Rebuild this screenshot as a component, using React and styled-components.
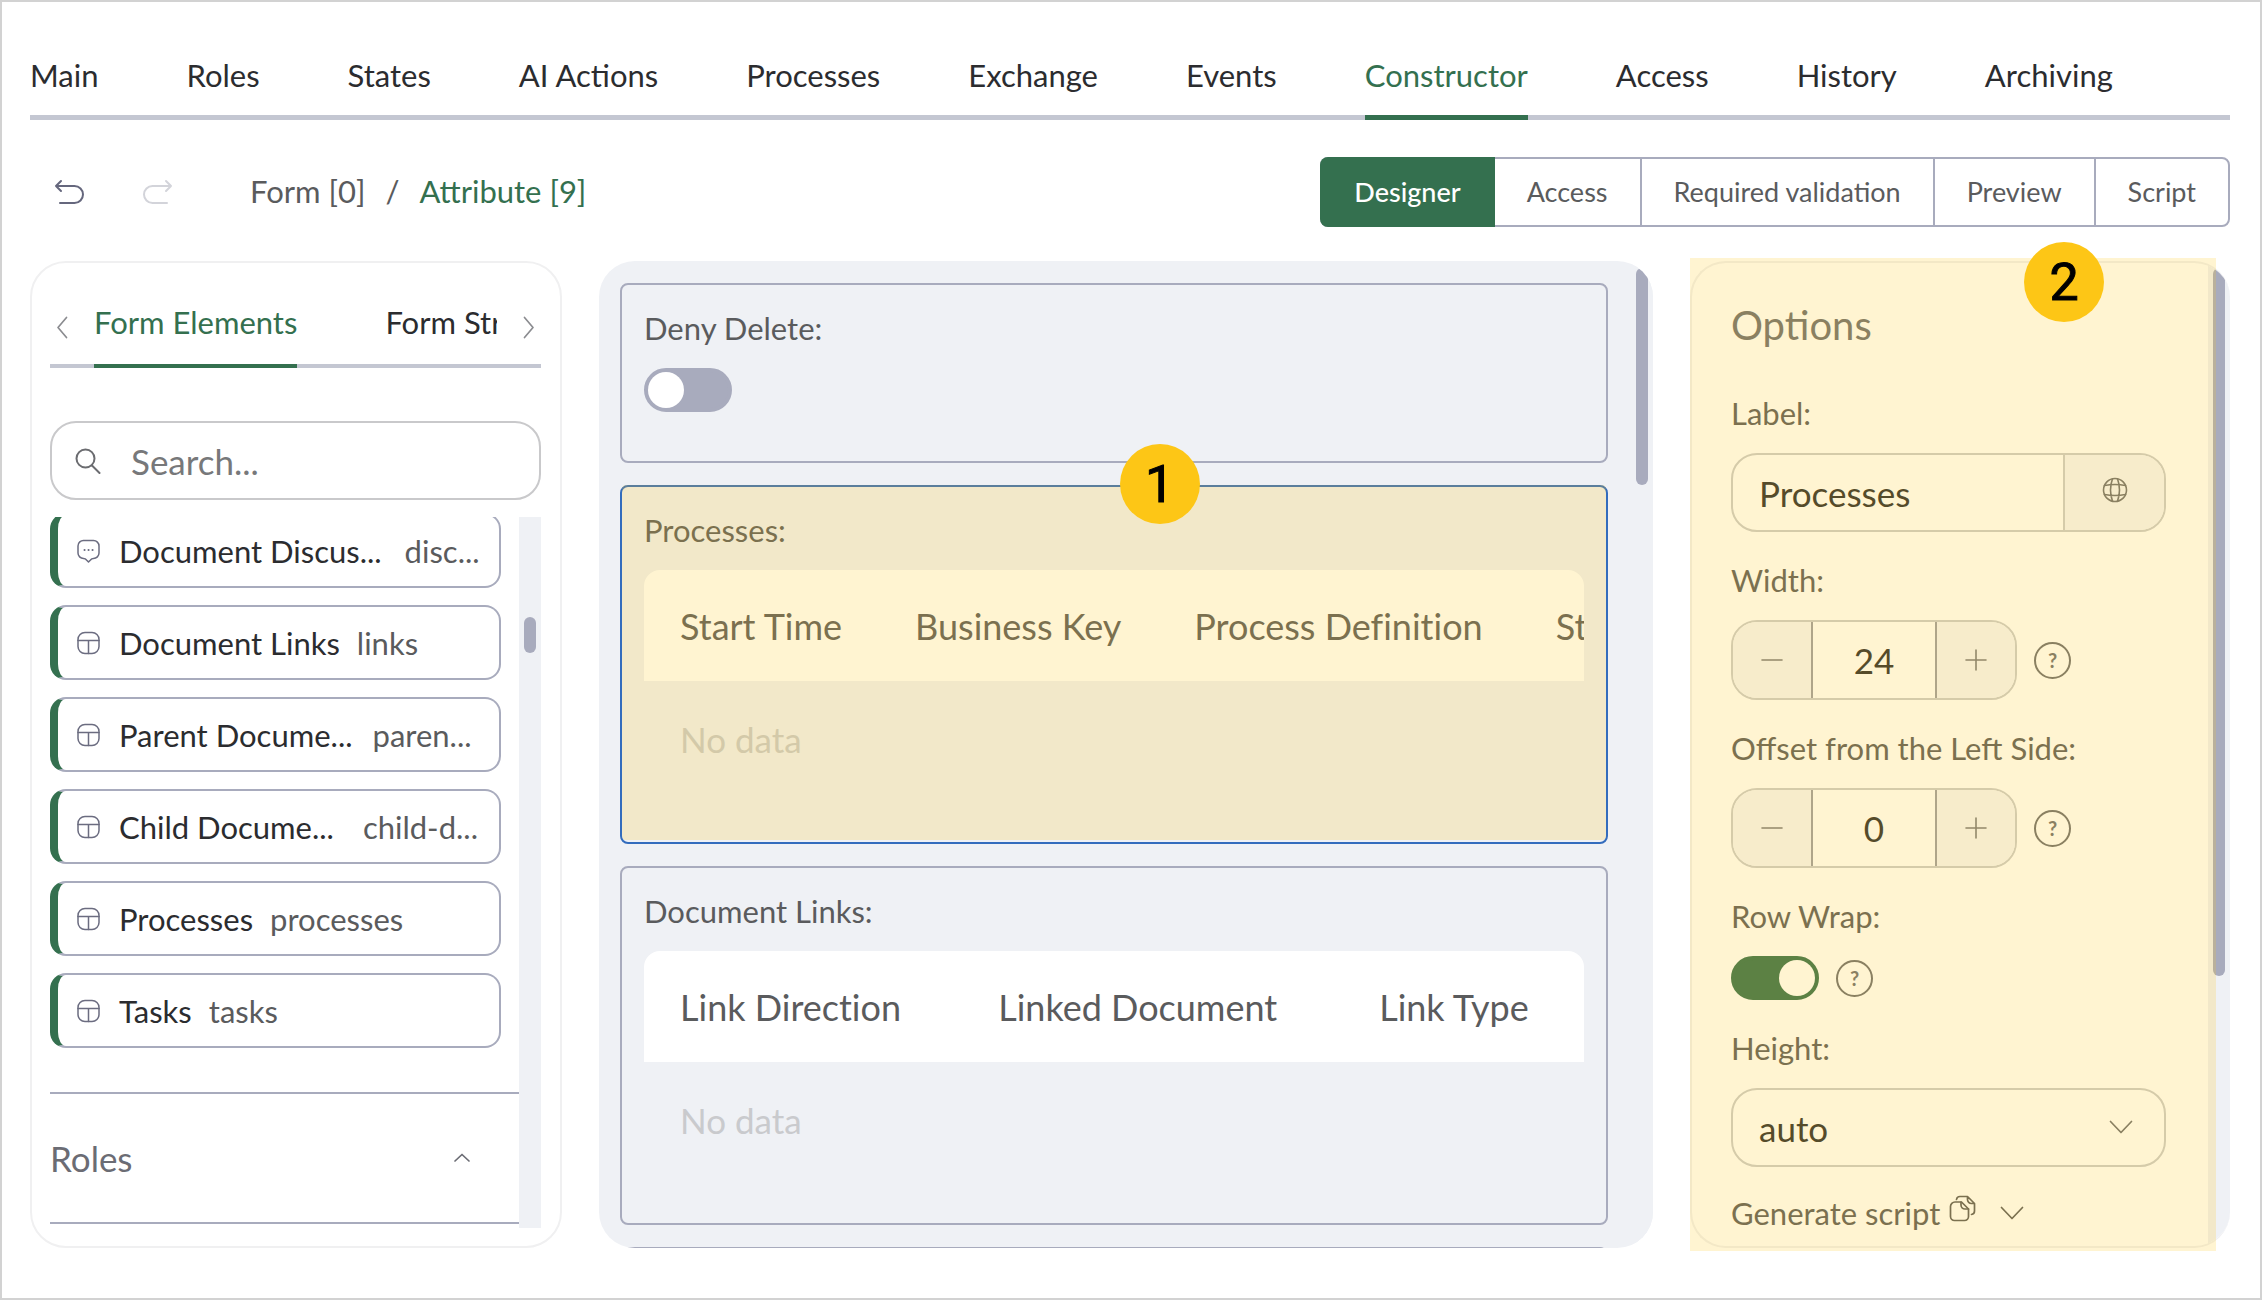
import React from 'react';
import styled, { createGlobalStyle } from 'styled-components';

const theme = {
    green: '#34704f',
    line: '#a8abbd',
    rule: '#c4c7d2',
    surface: '#eff1f5',
    addon: '#f6f6f8',
    text: '#2b2c2f',
    muted: '#5a5b5d',
    soft: '#c9cacd',
    yellow: '#fdc616',
    highlight: 'rgba(253, 200, 24, 0.2)',
};

const GlobalStyle = createGlobalStyle`
    * {
        box-sizing: border-box;
    }
    body {
        margin: 0;
        background: white;
        color: ${theme.text};
        font-family: Lato, 'Liberation Sans', sans-serif;
        font-size: 31px;
        line-height: 40px;
    }
    button, input, select {
        margin: 0;
        padding: 0;
        border: none;
        outline: 0;
        background: transparent;
        font: inherit;
        color: inherit;
    }
    button {
        cursor: pointer;
    }
    svg {
        display: block;
        flex: none;
        fill: none;
        stroke: currentColor;
        stroke-width: 2;
        stroke-linecap: round;
        stroke-linejoin: round;
    }
`

const Page = styled.div`
    display: flex;
    flex-direction: column;
    height: 100vh;
    padding: 53px 30px 50px 28px;
    border: 2px solid #d2d2d2;
`

const TopNav = styled.nav`
    display: flex;
    flex: none;
    gap: 88px;
    box-shadow: inset 0 -5px ${theme.rule};
`

const NavLink = styled.a`
    padding-bottom: 20px;
    border-bottom: 5px solid ${props => props.$active ? theme.green : 'transparent'};
    color: ${props => props.$active ? theme.green : theme.text};
    text-decoration: none;
    white-space: nowrap;
`

const Toolbar = styled.div`
    display: flex;
    flex: none;
    align-items: center;
    padding: 37px 0 34px 24px;
`

const IconButton = styled.button`
    color: ${props => props.$faded ? '#d3d4da' : '#65677d'};
    margin-right: 57px;
`

const Crumbs = styled.div`
    display: flex;
    gap: 20px;
    margin-left: 20px;
    padding-bottom: 2px;
    color: ${theme.muted};
`

const CrumbLink = styled.a`
    color: ${props => props.$active ? theme.green : theme.muted};
    text-decoration: none;
`

const ModeGroup = styled.div`
    display: flex;
    height: 70px;
    margin-left: auto;
    border: 2px solid ${theme.line};
    border-radius: 8px;
`

const ModeButton = styled.button`
    padding: 0 32px;
    font-size: 27px;
    color: ${props => props.$active ? 'white' : theme.muted};
    background: ${props => props.$active ? theme.green : 'transparent'};
    font-weight: ${props => props.$active ? 500 : 400};
    & + & {
        border-left: 2px solid ${theme.line};
    }
    &:first-child {
        margin: -2px 0 -2px -2px;
        padding: 0 34px;
        border-radius: 8px 0 0 8px;
    }
    &:nth-child(2) {
        border-left: none;
    }
`

const Workspace = styled.main`
    display: grid;
    flex: 1;
    min-height: 0;
    grid-template-columns: 532px minmax(0, 1fr) 540px;
    grid-template-rows: minmax(0, 1fr);
    gap: 37px;
`

const Sidebar = styled.aside`
    display: flex;
    flex-direction: column;
    min-height: 0;
    padding: 39px 19px 18px 18px;
    border: 2px solid #f0f0f1;
    border-radius: 36px;
`

const SideTabs = styled.div`
    display: flex;
    flex: none;
    box-shadow: inset 0 -4px ${theme.rule};
`

const TabArrow = styled.button`
    display: flex;
    flex: none;
    justify-content: ${props => props.$end ? 'flex-end' : 'flex-start'};
    width: 44px;
    padding: 14px 6px 0;
    color: #8b8c90;
`

const TabStrip = styled.div`
    display: flex;
    flex: 1;
    gap: 88px;
    overflow: hidden;
`

const SideTab = styled.button`
    flex: none;
    height: 66px;
    padding-bottom: 22px;
    border-bottom: 4px solid ${props => props.$active ? theme.green : 'transparent'};
    color: ${props => props.$active ? theme.green : theme.text};
`

const SearchBox = styled.label`
    display: flex;
    flex: none;
    align-items: center;
    gap: 30px;
    height: 79px;
    margin: 53px 0 17px;
    padding: 0 23px;
    border: 2px solid #c9c9cb;
    border-radius: 26px;
    color: #6b6c70;
`

const SearchInput = styled.input`
    flex: 1;
    min-width: 0;
    font-size: 35px;
    &::placeholder {
        color: #77787a;
        opacity: 1;
    }
`

const ListArea = styled.div`
    display: flex;
    flex: 1;
    min-height: 0;
    overflow: hidden;
`

const ListScroll = styled.div`
    flex: 1;
    min-width: 0;
`

const Track = styled.div`
    flex: none;
    width: 22px;
    padding-left: 5px;
    background: ${theme.surface};
`

const Thumb = styled.div`
    width: 12px;
    height: ${props => props.$size}%;
    margin-top: ${props => props.$top}px;
    border-radius: 6px;
    background: ${theme.line};
`

const Elements = styled.ul`
    display: flex;
    flex-direction: column;
    gap: 17px;
    margin: -4px 18px 0 0;
    padding: 0 0 44px;
    list-style: none;
`

const Element = styled.li`
    display: flex;
    align-items: center;
    height: 75px;
    padding: 0 18px;
    border: 2px solid ${theme.line};
    border-left: 8px solid ${theme.green};
    border-radius: 16px;
    white-space: nowrap;
    color: #6b6c80;
`

const ElementName = styled.span`
    margin: 0 17px 0 19px;
    color: ${theme.text};
`

const ElementCode = styled.span`
    margin-left: ${props => props.$gap || 0}px;
    color: ${theme.muted};
`

const Section = styled.button`
    display: flex;
    align-items: center;
    justify-content: space-between;
    width: 100%;
    height: 132px;
    padding: 0 48px 0 0;
    border-top: 2px solid ${theme.line};
    border-bottom: 2px solid ${theme.line};
    font-size: 35px;
    color: #6b6c74;
`

const Canvas = styled.section`
    display: flex;
    min-height: 0;
    overflow: hidden;
    border-radius: 36px;
    background: ${theme.surface};
`

const Cards = styled.div`
    display: flex;
    flex: 1;
    flex-direction: column;
    gap: 22px;
    min-width: 0;
    padding: 22px 23px 0 21px;
`

const Card = styled.div`
    position: relative;
    flex: none;
    min-height: ${props => props.$tall ? 359 : 180}px;
    padding: 23px 22px 0;
    border: 2px solid ${props => props.$selected ? '#336cbd' : theme.line};
    border-radius: 8px;
`

const CardTitle = styled.div`
    margin-bottom: 20px;
    color: ${theme.muted};
`

const Highlight = styled.div`
    position: absolute;
    inset: -2px 0 2px;
    border-radius: 4px;
    background: ${theme.highlight};
    pointer-events: none;
`

const PanelHighlight = styled(Highlight)`
    inset: -3px 14px -3px 0;
    border-radius: 0;
`

const Badge = styled.div`
    position: absolute;
    top: ${props => props.$top}px;
    right: ${props => props.$right};
    width: 80px;
    height: 80px;
    padding-top: 1px;
    border-radius: 50%;
    background: ${theme.yellow};
    color: black;
    font: 400 52px/80px Roboto, Arial, sans-serif;
    -webkit-text-stroke: 1px black;
    text-align: center;
`

const TableWrap = styled.div`
    overflow: hidden;
    border-radius: 16px 16px 0 0;
`

const Table = styled.table`
    min-width: 100%;
    border-collapse: collapse;
    font-size: 36px;
    font-variant-ligatures: none;
    white-space: nowrap;
    text-align: left;
`

const HeadCell = styled.th`
    height: 111px;
    padding: 0 37px 0 36px;
    background: white;
    font-weight: 400;
    color: ${theme.muted};
`

const EmptyCell = styled.td`
    height: 116px;
    padding: 0 36px;
    font-size: 35px;
    color: ${theme.soft};
`

const ToggleLabel = styled.label`
    display: block;
    margin-bottom: 20px;
    color: ${theme.muted};
`

const Toggle = styled.input.attrs({ type: 'checkbox' })`
    appearance: none;
    display: block;
    width: 88px;
    height: 44px;
    border: 4px solid ${theme.line};
    border-radius: 22px;
    background: ${theme.line};
    cursor: pointer;
    &::before {
        content: '';
        display: block;
        width: 36px;
        height: 36px;
        border-radius: 50%;
        background: white;
    }
    &:checked {
        border-color: ${theme.green};
        background: ${theme.green};
    }
    &:checked::before {
        margin-left: auto;
    }
`

const OptionsWrap = styled.aside`
    position: relative;
    min-height: 0;
`

const OptionsPanel = styled.div`
    display: flex;
    height: 100%;
    overflow: hidden;
    border: 2px solid #f0f0f2;
    border-right: none;
    border-radius: 36px;
`

const OptionsForm = styled.form`
    flex: 1;
    min-width: 0;
    padding: 38px 42px 0 39px;
`

const OptionsTitle = styled.h2`
    margin: 0 0 44px;
    font-size: 40px;
    line-height: 48px;
    font-weight: 400;
    color: #6d6e73;
`

const Field = styled.div`
    margin-bottom: 28px;
    &:last-of-type {
        margin-bottom: 26px;
    }
`

const FieldLabel = styled.label`
    display: block;
    margin-bottom: 20px;
    color: ${theme.muted};
`

const InputGroup = styled.div`
    display: flex;
    height: 79px;
    overflow: hidden;
    border: 2px solid #cbccce;
    border-radius: 26px;
    font-size: 35px;
`

const TextInput = styled.input`
    flex: 1;
    min-width: 0;
    padding-left: 26px;
`

const Addon = styled.button`
    display: flex;
    align-items: center;
    justify-content: center;
    width: 101px;
    padding-bottom: 6px;
    border-left: 2px solid #cbccce;
    background: ${theme.addon};
    color: #6d6e73;
`

const FieldRow = styled.div`
    display: flex;
    align-items: center;
    gap: 17px;
`

const Stepper = styled(InputGroup)`
    width: 286px;
    height: 80px;
`

const StepButton = styled.button`
    display: flex;
    align-items: center;
    justify-content: center;
    width: 78px;
    background: ${theme.addon};
    color: #77787d;
`

const StepInput = styled.input`
    flex: 1;
    min-width: 0;
    border: solid #9c9da6;
    border-width: 0 2px;
    text-align: center;
`

const HelpButton = styled.button`
    width: 37px;
    height: 37px;
    border: 2px solid #6d6e73;
    border-radius: 50%;
    color: #6d6e73;
    font-size: 20px;
    line-height: 33px;
    font-weight: 700;
`

const SelectBox = styled.div`
    position: relative;
    color: #6d6e73;
    svg {
        position: absolute;
        right: 33px;
        top: 32px;
        pointer-events: none;
    }
`

const Select = styled.select`
    appearance: none;
    display: block;
    width: 100%;
    height: 79px;
    padding-left: 26px;
    border: 2px solid #cbccce;
    border-radius: 26px;
    font-size: 35px;
    color: ${theme.text};
`

const GenerateButton = styled.button`
    display: flex;
    align-items: center;
    color: ${theme.muted};
    svg:first-of-type {
        margin: 0 24px 10px 9px;
    }
`

const UndoIcon = ({ flip }) => (
    <svg width="31" height="26" viewBox="0 0 31 26" transform={flip ? 'scale(-1 1)' : undefined}>
        <path d="M7 2 2 7l5 5M2 7h18.500a8.500 8.500 0 0 1 0 17H6" />
    </svg>
)

const Chevron = ({ direction, width = 24, height = 14 }) => {
    const paths = {
        down: 'M1.500 1.500 12 12.500 22.500 1.500',
        up: 'M2 8 9 1.500 16 8',
        left: 'M10.500 1.500 2 11.500l8.500 10',
        right: 'M1.500 1.500 10 11.500l-8.500 10',
    };
    return (
        <svg width={width} height={height} viewBox={`0 0 ${width} ${height}`}>
            <path d={paths[direction]} strokeWidth="1.700" />
        </svg>
    )
}

const SearchIcon = () => (
    <svg width="26" height="26" viewBox="0 0 26 26">
        <circle cx="10.500" cy="10.500" r="9" />
        <path d="M17 17.500 24.500 25" />
    </svg>
)

const TableIcon = () => (
    <svg width="24" height="24" viewBox="0 0 24 24">
        <rect x="2" y="1.500" width="21" height="21" rx="7" strokeWidth="1.500" />
        <path d="M2 9.500h21M12.500 9.500v13" strokeWidth="1.500" />
    </svg>
)

const ChatIcon = () => (
    <svg width="24" height="24" viewBox="0 0 24 24">
        <path strokeWidth="1.500" d="M8 1.500h9.500A5.500 5.500 0 0 1 23 7v7a5.500 5.500 0 0 1-5.500 5.500q-2 0-3 1.500l-2 2-2-2q-1-1.500-3-1.500A5.500 5.500 0 0 1 2 14V7a5.500 5.500 0 0 1 6-5.500Z" />
        <path d="M8.500 11h.1M12.500 11h.1M16.500 11h.1" strokeWidth="2" />
    </svg>
)

const GlobeIcon = () => (
    <svg width="26" height="26" viewBox="0 0 26 26">
        <g strokeWidth="1.600">
            <circle cx="13" cy="13" r="11.500" />
            <path d="M10.500 1.800q-4 11.200 0 22.400M15.500 1.800q4 11.200 0 22.400M2.500 8.500q10.500-2 21 0M2.500 17.500q10.500 2 21 0" />
        </g>
    </svg>
)

const CopyIcon = () => (
    <svg width="27" height="27" viewBox="0 0 27 27">
        <g strokeWidth="1.700">
            <path d="M6 7h6.500l7 7v7.500a4 4 0 0 1-4 4H5.500a4 4 0 0 1-4-4v-10A4.500 4.500 0 0 1 6 7Z" />
            <path d="M12 7v3a4 4 0 0 0 4 4h3.500" />
            <path d="M7.500 4.500a3.500 3.500 0 0 1 3.500-3h7.500l7 7V16a3.500 3.500 0 0 1-3 3.500M18.500 1.500v3a4 4 0 0 0 4 4h3" />
        </g>
    </svg>
)

const PlusIcon = () => (
    <svg width="22" height="22" viewBox="0 0 22 22">
        <path d="M1 11h20M11 1v20" strokeWidth="1.600" />
    </svg>
)

const MinusIcon = () => (
    <svg width="22" height="22" viewBox="0 0 22 22">
        <path d="M1 11h20" strokeWidth="1.600" />
    </svg>
)

const navItems = ['Main', 'Roles', 'States', 'AI Actions', 'Processes', 'Exchange', 'Events', 'Constructor', 'Access', 'History', 'Archiving'];
const modes = ['Designer', 'Access', 'Required validation', 'Preview', 'Script'];
const elements = [
    { name: 'Document Discus...', code: 'disc...', icon: ChatIcon, gap: 6 },
    { name: 'Document Links', code: 'links' },
    { name: 'Parent Docume...', code: 'paren...', gap: 3 },
    { name: 'Child Docume...', code: 'child-d...', gap: 12 },
    { name: 'Processes', code: 'processes' },
    { name: 'Tasks', code: 'tasks' },
];

function DataTable({ columns }) {
    return (
        <TableWrap>
            <Table>
                <thead>
                    <tr>
                        {columns.map(column => <HeadCell key={column} scope="col">{column}</HeadCell>)}
                    </tr>
                </thead>
                <tbody>
                    <tr>
                        <EmptyCell colSpan={columns.length}>No data</EmptyCell>
                    </tr>
                </tbody>
            </Table>
        </TableWrap>
    );
}

function NumberField({ id, label, value }) {
    return (
        <Field>
            <FieldLabel htmlFor={id}>{label}</FieldLabel>
            <FieldRow>
                <Stepper>
                    <StepButton type="button" aria-label="Decrease"><MinusIcon /></StepButton>
                    <StepInput id={id} defaultValue={value} inputMode="numeric" />
                    <StepButton type="button" aria-label="Increase"><PlusIcon /></StepButton>
                </Stepper>
                <HelpButton type="button">?</HelpButton>
            </FieldRow>
        </Field>
    );
}

function App() {
    return (
        <Page>
            <GlobalStyle />
            <TopNav>
                {navItems.map(item => (
                    <NavLink key={item} href="#" $active={item === 'Constructor'}>{item}</NavLink>
                ))}
            </TopNav>
            <Toolbar>
                <IconButton aria-label="Undo"><UndoIcon /></IconButton>
                <IconButton aria-label="Redo" $faded><UndoIcon flip /></IconButton>
                <Crumbs>
                    <CrumbLink href="#">Form [0]</CrumbLink>
                    <span>/</span>
                    <CrumbLink href="#" $active>Attribute [9]</CrumbLink>
                </Crumbs>
                <ModeGroup>
                    {modes.map(mode => (
                        <ModeButton key={mode} $active={mode === 'Designer'}>{mode}</ModeButton>
                    ))}
                </ModeGroup>
            </Toolbar>
            <Workspace>
                <Sidebar>
                    <SideTabs>
                        <TabArrow aria-label="Previous"><Chevron direction="left" width={12} height={23} /></TabArrow>
                        <TabStrip>
                            <SideTab $active>Form Elements</SideTab>
                            <SideTab>Form Structure</SideTab>
                        </TabStrip>
                        <TabArrow aria-label="Next" $end><Chevron direction="right" width={12} height={23} /></TabArrow>
                    </SideTabs>
                    <SearchBox>
                        <SearchIcon />
                        <SearchInput type="text" placeholder="Search..." aria-label="Search" />
                    </SearchBox>
                    <ListArea>
                        <ListScroll>
                            <Elements>
                                {elements.map(({ name, code, gap, icon: Icon = TableIcon }) => (
                                    <Element key={name}>
                                        <Icon />
                                        <ElementName>{name}</ElementName>
                                        <ElementCode $gap={gap}>{code}</ElementCode>
                                    </Element>
                                ))}
                            </Elements>
                            <Section>
                                Roles
                                <Chevron direction="up" width={18} height={10} />
                            </Section>
                        </ListScroll>
                        <Track><Thumb $top={100} $size={5} /></Track>
                    </ListArea>
                </Sidebar>
                <Canvas>
                    <Cards>
                        <Card>
                            <ToggleLabel htmlFor="deny">Deny Delete:</ToggleLabel>
                            <Toggle id="deny" />
                        </Card>
                        <Card $tall $selected>
                            <CardTitle>Processes:</CardTitle>
                            <DataTable columns={['Start Time', 'Business Key', 'Process Definition', 'State']} />
                            <Highlight />
                            <Badge $top={-43} $right="calc(41% + 3px)">1</Badge>
                        </Card>
                        <Card $tall>
                            <CardTitle>Document Links:</CardTitle>
                            <DataTable columns={['Link Direction', 'Linked Document', 'Link Type']} />
                        </Card>
                        <Card />
                    </Cards>
                    <Track><Thumb $top={7} $size={22} /></Track>
                </Canvas>
                <OptionsWrap>
                    <OptionsPanel>
                        <OptionsForm>
                            <OptionsTitle>Options</OptionsTitle>
                            <Field>
                                <FieldLabel htmlFor="label">Label:</FieldLabel>
                                <InputGroup>
                                    <TextInput id="label" defaultValue="Processes" />
                                    <Addon type="button" aria-label="Translate"><GlobeIcon /></Addon>
                                </InputGroup>
                            </Field>
                            <NumberField id="width" label="Width:" value="24" />
                            <NumberField id="offset" label="Offset from the Left Side:" value="0" />
                            <Field>
                                <FieldLabel htmlFor="wrap">Row Wrap:</FieldLabel>
                                <FieldRow>
                                    <Toggle id="wrap" defaultChecked />
                                    <HelpButton type="button">?</HelpButton>
                                </FieldRow>
                            </Field>
                            <Field>
                                <FieldLabel htmlFor="height">Height:</FieldLabel>
                                <SelectBox>
                                    <Select id="height">
                                        <option>auto</option>
                                    </Select>
                                    <Chevron direction="down" />
                                </SelectBox>
                            </Field>
                            <GenerateButton type="button">
                                Generate script
                                <CopyIcon />
                                <Chevron direction="down" />
                            </GenerateButton>
                        </OptionsForm>
                        <Track><Thumb $top={5} $size={72} /></Track>
                    </OptionsPanel>
                    <PanelHighlight />
                    <Badge $top={-19} $right="126px">2</Badge>
                </OptionsWrap>
            </Workspace>
        </Page>
    );
}

export default App;
